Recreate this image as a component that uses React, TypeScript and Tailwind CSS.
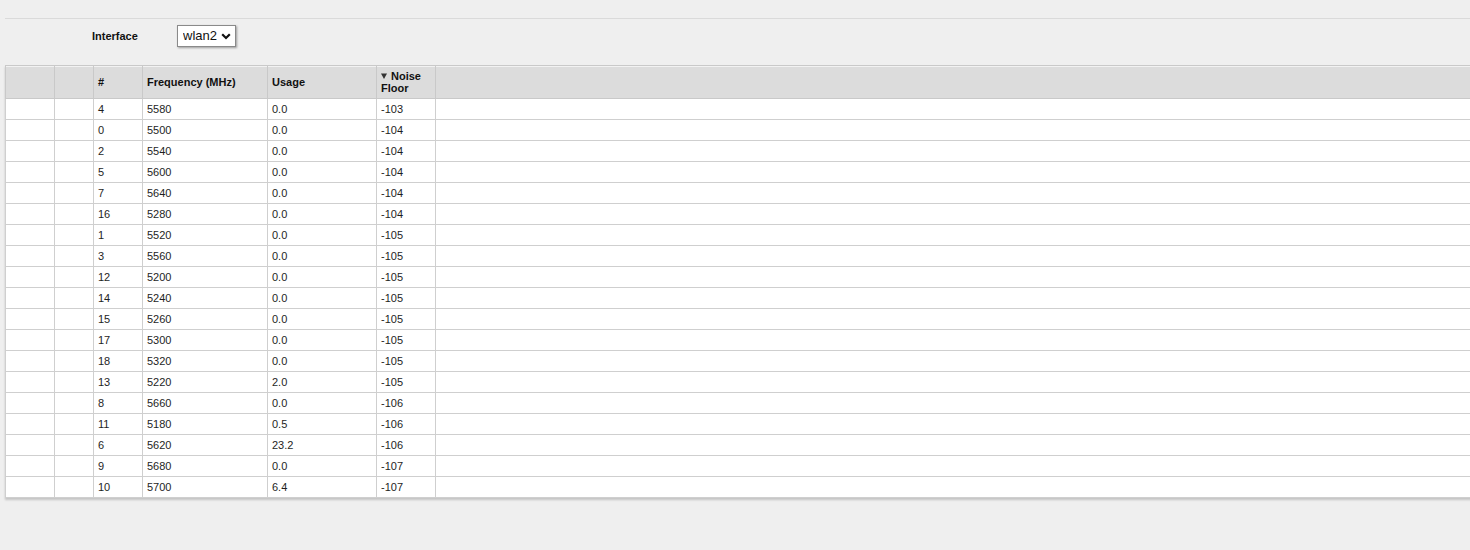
import { useState } from "react";

const rows = [
  ["4", "5580", "0.0", "-103"],
  ["0", "5500", "0.0", "-104"],
  ["2", "5540", "0.0", "-104"],
  ["5", "5600", "0.0", "-104"],
  ["7", "5640", "0.0", "-104"],
  ["16", "5280", "0.0", "-104"],
  ["1", "5520", "0.0", "-105"],
  ["3", "5560", "0.0", "-105"],
  ["12", "5200", "0.0", "-105"],
  ["14", "5240", "0.0", "-105"],
  ["15", "5260", "0.0", "-105"],
  ["17", "5300", "0.0", "-105"],
  ["18", "5320", "0.0", "-105"],
  ["13", "5220", "2.0", "-105"],
  ["8", "5660", "0.0", "-106"],
  ["11", "5180", "0.5", "-106"],
  ["6", "5620", "23.2", "-106"],
  ["9", "5680", "0.0", "-107"],
  ["10", "5700", "6.4", "-107"],
];

export default function App() {
  const [iface, setIface] = useState("wlan2");

  return (
    <div className="min-h-screen w-full overflow-hidden bg-[#efefef] pt-[18px] pl-[5px] font-['Liberation_Sans',Arial,sans-serif] text-[11px] text-[#1e1e1e]">
      <div className="border-t border-[#dadada] pt-[6px]">
        {/* Interface picker */}
        <div className="flex items-center pl-[87px]">
          <label className="w-[85px] font-bold text-[#111]">Interface</label>
          <div className="relative h-[22px] w-[59px] border border-[#8a8a8a] bg-white shadow-[1px_1px_2px_rgba(0,0,0,0.35)]">
            <select
              value={iface}
              onChange={(e) => setIface(e.target.value)}
              className="h-full w-full appearance-none bg-transparent pl-[5px] text-[13px] leading-[20px] text-[#111] outline-none"
            >
              <option>wlan0</option>
              <option>wlan1</option>
              <option>wlan2</option>
            </select>
            <svg
              className="pointer-events-none absolute right-[4px] top-[7px]"
              width="10"
              height="7"
              viewBox="0 0 10 7"
            >
              <path d="M1.2 1.2 L5 5 L8.8 1.2" fill="none" stroke="#111" strokeWidth="2.2" />
            </svg>
          </div>
        </div>

        {/* Channel table */}
        <div className="mt-[18px] w-[1500px] shadow-[0_2px_2px_rgba(0,0,0,0.18)]">
          <table className="w-full table-fixed border-collapse bg-white">
            <colgroup>
              <col className="w-[49px]" />
              <col className="w-[39px]" />
              <col className="w-[49px]" />
              <col className="w-[125px]" />
              <col className="w-[109px]" />
              <col className="w-[59px]" />
              <col />
            </colgroup>
            <thead>
              <tr className="h-[33px] bg-[#dcdcdc] shadow-[inset_0_1px_0_#f2f2f2] text-left font-bold text-[#111]">
                <th className="border border-[#c9c9c9]"></th>
                <th className="border border-[#c9c9c9]"></th>
                <th className="border border-[#c9c9c9] px-[4px]">#</th>
                <th className="border border-[#c9c9c9] px-[4px]">Frequency (MHz)</th>
                <th className="border border-[#c9c9c9] px-[4px]">Usage</th>
                <th className="border border-[#c9c9c9] px-[4px] leading-[12px]">
                  <span className="inline-flex items-center gap-[4px]">
                    <svg width="6" height="7" viewBox="0 0 6 7">
                      <path d="M0 0.5 H6 L3 6 Z" fill="#333" />
                    </svg>
                    Noise
                  </span>
                  <br />
                  Floor
                </th>
                <th className="border border-[#c9c9c9]"></th>
              </tr>
            </thead>
            <tbody>
              {rows.map((r, i) => (
                <tr key={i} className="h-[21px]">
                  <td className="border border-[#cfcfcf]"></td>
                  <td className="border border-[#cfcfcf]"></td>
                  <td className="border border-[#cfcfcf] px-[4px]">{r[0]}</td>
                  <td className="border border-[#cfcfcf] px-[4px]">{r[1]}</td>
                  <td className="border border-[#cfcfcf] px-[4px]">{r[2]}</td>
                  <td className="border border-[#cfcfcf] px-[4px]">{r[3]}</td>
                  <td className="border border-[#cfcfcf]"></td>
                </tr>
              ))}
            </tbody>
          </table>
        </div>
      </div>
    </div>
  );
}
